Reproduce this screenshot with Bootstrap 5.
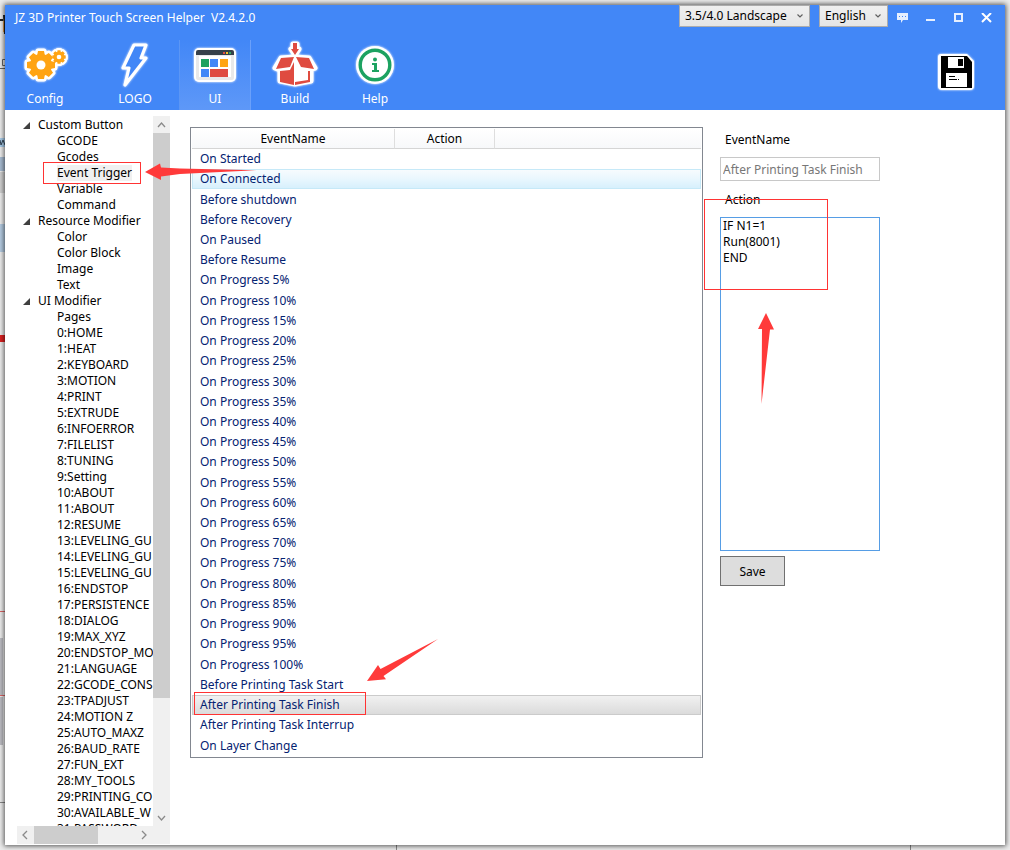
<!DOCTYPE html>
<html lang="en">
<head>
<meta charset="utf-8">
<meta name="viewport" content="width=device-width, initial-scale=1">
<title>JZ 3D Printer Touch Screen Helper</title>
<link href="https://cdn.jsdelivr.net/npm/bootstrap@5.3.0/dist/css/bootstrap.min.css" rel="stylesheet">
<style>
  body { font: 12px/16px "Noto Sans", "Open Sans", sans-serif; color: #000; background: #ececec; height: 100vh; padding: 5px; }
  .desk { position: absolute; left: 0; top: 0; }
  .desk-foot { position: absolute; left: 396px; right: 99px; bottom: 0; height: 5px; border: solid #888; border-width: 0 1px; }
  .app { height: 100%; min-height: 640px; background: #fff; box-shadow: 0 0 5px 1px rgba(0,0,0,.65); position: relative; }
  .app-head { background: #4287f7; color: #fff; }
  .title-row { height: 35px; padding: 0 5px 0 10px; }
  .title-text { line-height: 26px; font-size: 12px; font-weight: 400; }
  .pick { width: 131px; height: 22px; font-size: 12px; line-height: 20px; color: #000; border: 1px solid #acacac; border-radius: 0; padding: 0 18px 0 5px;
    background: url("data:image/svg+xml,%3csvg xmlns='http://www.w3.org/2000/svg' viewBox='0 0 8 6'%3e%3cpath fill='none' stroke='%23606060' stroke-width='1.2' d='M1.5 1.5 4 4l2.5-2.5'/%3e%3c/svg%3e") no-repeat right 5px center / 8px 6px, linear-gradient(#f0f0f0, #e5e5e5); }
  .picks { display: flex; gap: 9px; }
  .pick-lang { width: 69px; }
  .win-btn { width: 28px; height: 24px; padding: 0; border: 0; border-radius: 0; line-height: 1; }
  .tools { padding-left: 5px; padding-right: 30px; gap: 10px; }
  .tool { width: 70px; height: 70px; padding: 1px 0 0; border: 0; border-radius: 0; color: #fff; font-size: 12px; line-height: 20px; }
  .tool-wide { width: 80px; padding-right: 10px; }
  .tool:hover, .tool:active { color: #fff; }
  .tool svg { display: block; overflow: visible; }
  .tool.is-on { background: linear-gradient(#4287f7, #5e98f8); box-shadow: -1px 0 0 #5b96f5, 1px 0 0 #6aa0fa; }
  .glow { filter: drop-shadow(0 0 1px #fff); }
  .tree-panel { width: 153px; margin: 6px 0 1px 12px; display: grid; grid-template: minmax(0, 1fr) 18px / minmax(0, 1fr) 17px; }
  .tree { overflow: hidden; padding-top: 1px; }
  .tree ul { list-style: none; margin: 0; padding: 0; white-space: nowrap; }
  .tree a { color: #000; text-decoration: none; display: inline-block; height: 16px; vertical-align: top; }
  .tree .leafs { padding-left: 40px; }
  .tree .is-on { background: #f0f0f0; }
  .twist { width: 21px; height: 16px; display: inline-block; vertical-align: top; }
  .bar { background: #f0f0f0; }
  .bar svg { display: block; flex: none; fill: none; stroke: #8a8a8a; stroke-width: 1.3; }
  .bar i { background: #cdcdcd; }
  .red-box { position: absolute; border: 1px solid #f33; pointer-events: none; z-index: 2; }
  .red-arrow { position: absolute; pointer-events: none; fill: #ff3a3a; z-index: 2; }
  .events { margin: 17px 0 0 20px; border: 1px solid #828790; padding: 1px; }
  .events table { height: 627px; table-layout: fixed; border-collapse: separate; border-spacing: 0; font-size: 12px; color: #042271; --bs-table-bg: transparent; }
  .events th { height: 20px; padding: 0; line-height: 18px; font-weight: 400; text-align: center; color: #000; background: linear-gradient(#fff, #f7f8fa); border-right: 1px solid #dedede; border-bottom: 1px solid #d5d5d5; }
  .events th:last-child { border-right: 0; }
  .events td { padding: 0 0 0 8px; line-height: 18px; color: #042271; white-space: nowrap; vertical-align: middle; }
  .events .is-hot { background: linear-gradient(#f8fcfe, #e9f7fe 50%, #d5effc); box-shadow: inset 0 0 0 1px #c6e9f8; }
  .events .is-sel { background: linear-gradient(#f2f2f2, #dadada); box-shadow: inset 0 0 0 1px #cbcbcb; }
  .side { width: 302px; padding: 22px 0 0 17px; }
  .side label { display: block; padding-left: 5px; line-height: 16px; }
  .side .form-control { width: 160px; font-size: 12px; border-radius: 0; }
  .name-box { height: 24px; margin: 9px 0 11px; padding: 0 2px; line-height: 20px; border-color: #c8c8c8; color: #777; }
  .name-box:disabled { background: #fff; }
  .code-wrap { margin-top: 9px; }
  .code-box { display: block; height: 334px; padding: 0 2px; line-height: 16px; border: 1px solid #569de5; color: #000; resize: none; }
  .code-box, .code-box:focus { border-color: #569de5; box-shadow: none; }
  .save { width: 65px; height: 30px; margin-top: 5px; padding: 2px 0 0; font-size: 12px; color: #000; background: #ddd; border: 1px solid #707070; border-radius: 0; }
</style>
</head>
<body>
<svg class="desk" width="5" height="850" aria-hidden="true">
  <path fill="#222" d="M0 19h3v2H0zM3 15h2v19H4z"/><path fill="#e09a50" d="M3 21h1v11H3z"/>
  <path fill="none" stroke="#666" d="M5 59.500H2.500v6H5M0 68.500h5"/>
  <path fill="#a9cdea" d="M0 138h5v9H0z"/><path fill="none" stroke="#345" d="m0 140 1 5 2-5 2 5"/>
  <path fill="#a8bcd2" d="M0 157h5v14H0z"/><path fill="#d0d0d0" d="M0 172h5v21H0z"/><path fill="#b5cce2" d="M0 224h5v28H0z"/>
  <path fill="#d22" d="M0 335h5v7H0z"/><path fill="#d66" d="M0 611h5v1H0zM0 695h5v1H0z"/>
  <path fill="#bcbcc2" d="M0 638h3v57H0zM0 697h3v48H0z"/><path fill="#888" d="M0 802h5v1H0z"/>
</svg>
<div class="desk-foot" aria-hidden="true"></div>
<svg width="0" height="0" class="position-absolute" aria-hidden="true">
  <defs>
    <g id="gear"><circle r="11"/><path d="M-3-14h6l1 5h-8zM-3 14h6l1-5h-8zM-14-3v6l5 1v-8zM14-3v6l-5 1v-8z"/><path transform="rotate(45)" d="M-3-14h6l1 5h-8zM-3 14h6l1-5h-8zM-14-3v6l5 1v-8zM14-3v6l-5 1v-8z"/></g>
  </defs>
</svg>

<div class="app d-flex flex-column">
  <header class="app-head flex-shrink-0">
    <div class="title-row d-flex align-items-start">
      <h1 class="title-text mb-0 me-auto">JZ 3D Printer Touch Screen Helper&nbsp; V2.4.2.0</h1>
      <div class="picks">
        <select class="form-select pick" aria-label="Screen"><option>3.5/4.0 Landscape</option></select>
        <select class="form-select pick pick-lang" aria-label="Language"><option>English</option></select>
      </div>
      <button class="btn win-btn" aria-label="Feedback"><svg width="12" height="12"><path fill="#e6effe" d="M1 0h11v7H7l-2 3V7H1z"/><path fill="#4287f7" d="M3 3h1v1H3zM6 3h1v1H6zM9 3h1v1H9z"/></svg></button>
      <button class="btn win-btn" aria-label="Minimize"><svg width="12" height="12"><path fill="#e6effe" d="M2 6h9v2H2z"/></svg></button>
      <button class="btn win-btn" aria-label="Maximize"><svg width="12" height="12"><path fill="none" stroke="#e6effe" stroke-width="2" d="M3 1h7v7H3z"/></svg></button>
      <button class="btn win-btn" aria-label="Close"><svg width="12" height="12"><path stroke="#fff" stroke-width="2" d="m2 0 9 9m0-9-9 9"/></svg></button>
    </div>
    <nav class="tools d-flex align-items-start">
      <button class="btn tool tool-wide"><svg width="70" height="46"><g class="glow"><g fill="#fff" stroke="#fff" stroke-width="5" stroke-linejoin="round"><use href="#gear" x="31" y="22"/><use href="#gear" transform="translate(49 14) scale(.48)" stroke-width="9"/></g></g><g fill="#ffa414"><use href="#gear" x="31" y="22"/><use href="#gear" transform="translate(49 14) scale(.48)"/></g><g fill="#fff"><circle cx="31" cy="22" r="4.5"/><circle cx="49" cy="14" r="2.3"/></g></svg>Config</button>
      <button class="btn tool"><svg width="70" height="46"><path class="glow" fill="#4287f7" stroke="#fff" stroke-width="3.2" stroke-linejoin="round" d="M34 2h12l-5 13h5L25 42l4-17h-6z"/></svg>LOGO</button>
      <button class="btn tool is-on"><svg width="70" height="46"><rect class="glow" x="14" y="5" width="42" height="34" rx="5" fill="#fff"/><path fill="#e9e9e9" d="M16 11h38v24a2 2 0 0 1-2 2H18a2 2 0 0 1-2-2z"/><path fill="#fff" d="M19 13h32v21H19z"/><path fill="#36404a" d="M18 7h34a2 2 0 0 1 2 2v3H16V9a2 2 0 0 1 2-2z"/><path fill="#e05045" d="M43 9h2v2h-2z"/><path fill="#f8c32c" d="M46 9h2v2h-2z"/><path fill="#2fa565" d="M49 9h2v2h-2z"/><path fill="#1ca261" d="M21 16h8v8h-8z"/><path fill="#4287f7" d="M30 16h8v8h-8zM21 26h8v8h-8z"/><path fill="#ffa414" d="M40 16h8v8h-8z"/><path fill="#df4b40" d="M30 26h18v8H30z"/></svg>UI</button>
      <button class="btn tool"><svg width="70" height="46"><g class="glow" fill="#fff" stroke="#fff" stroke-width="5" stroke-linejoin="round"><path d="M33 1h4v5h2l-4 6-4-6h2z"/><path d="M21 15l14-1 14 1 6 10-4 1v12l-16 3-15-3V27l-5-2z"/></g><g fill="#df4b40"><path d="M33 0h4v6h2l-4 6-4-6h2zM21 15l13-1-4 10-14 2zM49 15l-13-1 5 10 13 2zM20 28l10-1 4-8v23l-14-3z"/><path d="M48 28h2v11l-15 3v-3l13-2z"/></g></svg>Build</button>
      <button class="btn tool"><svg width="70" height="46"><circle class="glow" cx="35" cy="22" r="19" fill="#fff"/><circle cx="35" cy="22" r="14.800" fill="none" stroke="#1ca261" stroke-width="3.400"/><path fill="#1ca261" d="M32 20h5v7h2v2h-7v-2h2v-5h-2z"/><circle cx="35" cy="16.500" r="2" fill="#1ca261"/></svg>Help</button>
      <button class="btn p-0 border-0 ms-auto mt-2" aria-label="Save file"><svg class="d-block mt-1" width="38" height="40"><path class="glow" fill="#fff" d="M4 2h26l7 7v25a4 4 0 0 1-4 4H5a4 4 0 0 1-4-4V5a3 3 0 0 1 3-3z"/><path d="M4 4h26l5 6v26H4z"/><path fill="#fff" d="M11 5h16v11H11zM9 21h21v14H9z"/><path d="M21 7h5v7h-5zM12 24h6v1h-6zM12 27h8v1h-8zM21 27h1v1h-1z"/></svg></button>
    </nav>
  </header>

  <main class="d-flex flex-grow-1" style="min-height:0">
    <aside class="tree-panel flex-shrink-0 position-relative">
      <nav class="tree">
        <ul id="tree"></ul>
      </nav>
      <div class="bar d-flex flex-column" aria-hidden="true">
        <svg width="17" height="17"><path d="m5 11 3.500-4 3.500 4"/></svg>
        <i class="flex-grow-1"></i>
        <svg width="17" height="128"><path d="m5 118 3.500 4 3.500-4"/></svg>
      </div>
      <div class="bar d-flex" aria-hidden="true">
        <svg width="17" height="17"><path d="m10 5-4 4 4 4"/></svg>
        <i style="width:64px"></i>
        <svg width="55" height="17"><path d="m44 5 4 4-4 4"/></svg>
      </div>
      <div class="bar" aria-hidden="true"></div>
      <div class="red-box" style="left:26px;top:46px;width:98px;height:22px"></div>
      <svg class="red-arrow" style="left:127px;top:46px" width="114" height="20"><path d="M1 10 16 1.500 17 5.500 36 6.500 112 8.300 36 12 17 14.500V18z"/></svg>
    </aside>

    <section class="flex-grow-1">
      <div class="events">
        <table class="table table-borderless mb-0">
          <colgroup><col style="width:203px"><col style="width:100px"><col></colgroup>
          <thead><tr><th scope="col">EventName</th><th scope="col">Action</th><th></th></tr></thead>
          <tbody id="rows"></tbody>
        </table>
      </div>
    </section>

    <section class="side flex-shrink-0">
      <label for="evName">EventName</label>
      <input id="evName" class="form-control name-box" value="After Printing Task Finish" disabled>
      <label for="evAct">Action</label>
      <div class="code-wrap position-relative">
        <textarea id="evAct" class="form-control code-box" spellcheck="false">IF N1=1
Run(8001)
END</textarea>
        <div class="red-box" style="left:-16px;top:-18px;width:124px;height:91px"></div>
        <svg class="red-arrow" style="left:37px;top:95px" width="20" height="95"><path d="M9 1 17 17.500H13L4.500 92 5 17H1z"/></svg>
      </div>
      <button class="btn save">Save</button>
    </section>
  </main>
</div>

<script>
  const groups = [
    ['Custom Button', ['GCODE', 'Gcodes', 'Event Trigger', 'Variable', 'Command']],
    ['Resource Modifier', ['Color', 'Color Block', 'Image', 'Text']],
    ['UI Modifier', ['Pages', '0:HOME', '1:HEAT', '2:KEYBOARD', '3:MOTION', '4:PRINT', '5:EXTRUDE', '6:INFOERROR', '7:FILELIST', '8:TUNING', '9:Setting', '10:ABOUT', '11:ABOUT', '12:RESUME', '13:LEVELING_GU', '14:LEVELING_GU', '15:LEVELING_GU', '16:ENDSTOP', '17:PERSISTENCE', '18:DIALOG', '19:MAX_XYZ', '20:ENDSTOP_MO', '21:LANGUAGE', '22:GCODE_CONS', '23:TPADJUST', '24:MOTION Z', '25:AUTO_MAXZ', '26:BAUD_RATE', '27:FUN_EXT', '28:MY_TOOLS', '29:PRINTING_CO', '30:AVAILABLE_W', '31:PASSWORD']]
  ];
  const twist = '<svg class="twist" aria-hidden="true"><path fill="#404040" d="M13 5v7H6z"/></svg>';
  document.getElementById('tree').innerHTML = groups.map(([name, items]) =>
    `<li>${twist}<a href="#">${name}</a><ul class="leafs">` +
    items.map(t => `<li><a href="#"${t === 'Event Trigger' ? ' class="is-on"' : ''}>${t}</a></li>`).join('') + '</ul></li>').join('');

  const events = ['On Started', 'On Connected', 'Before shutdown', 'Before Recovery', 'On Paused', 'Before Resume'];
  for (let p = 5; p <= 100; p += 5) events.push(`On Progress ${p}%`);
  events.push('Before Printing Task Start', 'After Printing Task Finish', 'After Printing Task Interrup', 'On Layer Change');
  const marks = '<div class="red-box" style="left:2px;top:-3px;width:172px;height:23px"></div>' +
    '<svg class="red-arrow" style="left:173px;top:-58px" width="75" height="46"><path d="M2 44 13 28 15.500 32 73 2 18.500 39 21 42.300z"/></svg>';
  document.getElementById('rows').innerHTML = events.map(e => {
    const sel = e === 'After Printing Task Finish';
    const cls = sel ? 'is-sel' : e === 'On Connected' ? 'is-hot' : '';
    return `<tr class="${cls}"><td class="position-relative">${e}${sel ? marks : ''}</td><td></td><td></td></tr>`;
  }).join('');
</script>
<script src="https://cdn.jsdelivr.net/npm/bootstrap@5.3.0/dist/js/bootstrap.bundle.min.js"></script>
</body>
</html>
